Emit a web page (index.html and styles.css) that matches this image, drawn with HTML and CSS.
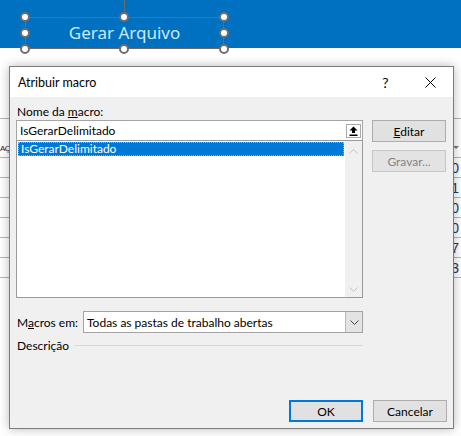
FILE: index.html
```html
<!DOCTYPE html>
<html lang="pt-BR">
<head>
    <meta charset="UTF-8">
    <meta name="viewport" content="width=device-width, initial-scale=1.0">
    <title>Atribuir macro</title>
    <link rel="stylesheet" href="styles.css">
</head>
<body>
    <!-- Faixa azul com o botão selecionado -->
    <div class="ribbon">
        <div class="shape">
            <span class="shape-stem"></span>
            <span class="shape-label">Gerar Arquivo</span>
            <span class="handle h-tl"></span>
            <span class="handle h-tc"></span>
            <span class="handle h-tr"></span>
            <span class="handle h-ml"></span>
            <span class="handle h-mr"></span>
            <span class="handle h-bl"></span>
            <span class="handle h-bc"></span>
            <span class="handle h-br"></span>
        </div>
    </div>

    <!-- Planilha atrás da janela -->
    <div class="sheet">
        <div class="sheet-row row-blank"></div>
        <div class="sheet-row row-head">
            <span class="cell-left">AÇ</span>
            <span class="cell-right"><span class="filter"></span></span>
        </div>
        <div class="sheet-row"><span class="cell-left"></span><span class="cell-right">0</span></div>
        <div class="sheet-row"><span class="cell-left"></span><span class="cell-right">1</span></div>
        <div class="sheet-row"><span class="cell-left"></span><span class="cell-right">0</span></div>
        <div class="sheet-row"><span class="cell-left"></span><span class="cell-right">0</span></div>
        <div class="sheet-row"><span class="cell-left"></span><span class="cell-right">7</span></div>
        <div class="sheet-row"><span class="cell-left"></span><span class="cell-right">3</span></div>
    </div>

    <!-- Janela Atribuir macro -->
    <div class="dialog">
        <div class="dialog-title">
            <span class="title-text">Atribuir macro</span>
            <span class="title-btn">?</span>
            <span class="title-btn">
                <svg width="11" height="11" viewBox="0 0 11 11"><path d="M0.5 0.5 L10.5 10.5 M10.5 0.5 L0.5 10.5" stroke="#000" stroke-width="1"/></svg>
            </span>
        </div>

        <div class="dialog-body">
            <div class="main-grid">
                <div class="left-col">
                    <div class="label">Nome da <u>m</u>acro:</div>
                    <div class="name-input">
                        <span class="name-text">IsGerarDelimitado</span>
                        <span class="collapse-btn">
                            <svg width="9" height="10" viewBox="0 0 9 10"><path d="M4.5 0.5 L8.5 4.5 H6 V7 H3 V4.5 H0.5 Z" fill="#000"/><rect x="0.5" y="8.5" width="8" height="1.5" fill="#000"/></svg>
                        </span>
                    </div>
                    <div class="macro-list">
                        <div class="list-items">
                            <div class="list-item selected">IsGerarDelimitado</div>
                        </div>
                        <div class="scrollbar">
                            <svg width="9" height="5" viewBox="0 0 9 5"><path d="M0.5 4.5 L4.5 0.5 L8.5 4.5" fill="none" stroke="#c2c2c2"/></svg>
                            <svg width="9" height="5" viewBox="0 0 9 5"><path d="M0.5 0.5 L4.5 4.5 L8.5 0.5" fill="none" stroke="#c2c2c2"/></svg>
                        </div>
                    </div>
                </div>
                <div class="right-col">
                    <button class="btn"><u>E</u>ditar</button>
                    <button class="btn disabled">Gravar...</button>
                </div>
            </div>

            <div class="scope-row">
                <span class="scope-label">M<u>a</u>cros em:</span>
                <div class="combo">
                    <span class="combo-text">Todas as pastas de trabalho abertas</span>
                    <span class="combo-btn">
                        <svg width="9" height="5" viewBox="0 0 9 5"><path d="M0.5 0.5 L4.5 4.5 L8.5 0.5" fill="none" stroke="#444"/></svg>
                    </span>
                </div>
            </div>

            <div class="desc-row">
                <span>Descrição</span>
                <span class="desc-line"></span>
            </div>
        </div>

        <div class="dialog-footer">
            <button class="btn default">OK</button>
            <button class="btn">Cancelar</button>
        </div>
    </div>
</body>
</html>
```

FILE: styles.css
```css
/* Base */
body {
    margin: 0;
    width: 461px;
    height: 436px;
    overflow: hidden;
    position: relative;
    background: #ffffff;
    font-family: 'Lato', 'Noto Sans', sans-serif;
    font-size: 12px;
    color: #000;
}

/* Blue band with the selected button shape */
.ribbon {
    height: 48px;
    background: #0070c0;
    position: relative;
}

.shape {
    position: absolute;
    left: 25px;
    top: 17px;
    width: 199px;
    height: 32px;
    box-sizing: border-box;
    border: 1px solid #6a6a6a;
    display: flex;
    align-items: center;
    justify-content: center;
}

.shape-label {
    color: #cbeafd;
    font-family: 'Noto Sans', sans-serif;
    font-size: 17px;
    font-weight: 400;
    margin-bottom: 1px;
}

.shape-stem {
    position: absolute;
    left: 98px;
    top: -18px;
    width: 1px;
    height: 18px;
    background: #6a6a6a;
}

.handle {
    position: absolute;
    width: 10px;
    height: 10px;
    box-sizing: border-box;
    border-radius: 50%;
    background: #fff;
    border: 2px solid #6e6e6e;
}

.h-tl { left: -6px; top: -6px; }
.h-tc { left: 93px; top: -6px; }
.h-tr { right: -6px; top: -6px; }
.h-ml { left: -6px; top: 10px; }
.h-mr { right: -6px; top: 10px; }
.h-bl { left: -6px; bottom: -6px; }
.h-bc { left: 93px; bottom: -6px; }
.h-br { right: -6px; bottom: -6px; }

/* Worksheet behind the dialog */
.sheet {
    display: flex;
    flex-direction: column;
    font-family: 'Liberation Sans', sans-serif;
    font-size: 12px;
}

.sheet-row {
    height: 20px;
    display: flex;
    justify-content: space-between;
    align-items: center;
    border-bottom: 1px solid #b4b4b4;
    box-sizing: border-box;
}

.row-blank {
    height: 71px;
}

.row-head {
    height: 39px;
    align-items: flex-end;
    padding-bottom: 4px;
}

.cell-left {
    font-size: 8px;
    letter-spacing: -0.5px;
    white-space: nowrap;
    color: #222;
}

.cell-right {
    padding-right: 2px;
    color: #1f3864;
    font-size: 14px;
}

.filter {
    display: block;
    width: 0;
    height: 0;
    border-left: 3px solid transparent;
    border-right: 3px solid transparent;
    border-top: 3px solid #777;
    margin-bottom: 4px;
}

/* Dialog */
.dialog {
    position: absolute;
    left: 9px;
    top: 66px;
    width: 445px;
    height: 363px;
    box-sizing: border-box;
    border: 1px solid #7c7c7c;
    background: #f0f0f0;
    box-shadow: 0 0 10px rgba(0, 0, 0, 0.28);
    display: flex;
    flex-direction: column;
}

.dialog-title {
    height: 30px;
    background: #fff;
    display: flex;
    align-items: center;
    padding-left: 8px;
    font-size: 12.5px;
}

.title-text {
    flex: 1;
}

.title-btn {
    width: 45px;
    height: 30px;
    display: flex;
    align-items: center;
    justify-content: center;
    font-size: 14px;
}

.dialog-body {
    flex: 1;
    padding: 7px 6px 0 6px;
}

.main-grid {
    display: grid;
    grid-template-columns: 347px 74px;
    column-gap: 9px;
}

.label {
    height: 16px;
    line-height: 16px;
    padding-left: 1px;
}

.name-input {
    height: 20px;
    box-sizing: border-box;
    border: 1px solid #a6a6a6;
    border-bottom: none;
    background: #fff;
    display: flex;
    align-items: center;
    padding: 0 1px 0 3px;
}

.name-text {
    flex: 1;
}

.collapse-btn {
    width: 15px;
    height: 14px;
    box-sizing: border-box;
    border: 1px solid #a9a9a9;
    display: flex;
    align-items: center;
    justify-content: center;
}

.macro-list {
    height: 158px;
    box-sizing: border-box;
    border: 1px solid #9a9a9a;
    background: #fff;
    display: flex;
}

.list-items {
    flex: 1;
    padding: 1px 1px 0 1px;
}

.list-item {
    height: 14px;
    line-height: 12px;
    padding-left: 2px;
    box-sizing: border-box;
}

.list-item.selected {
    background: #0078d7;
    color: #fff;
    border: 1px dotted #7fb4e8;
}

.scrollbar {
    width: 17px;
    background: #f0f0f0;
    display: flex;
    flex-direction: column;
    align-items: center;
    justify-content: space-between;
    padding: 8px 0 5px;
}

.right-col {
    display: flex;
    flex-direction: column;
    gap: 8px;
    padding-top: 16px;
}

.btn {
    height: 22px;
    width: 74px;
    box-sizing: border-box;
    border: 1px solid #adadad;
    background: #e1e1e1;
    font-family: inherit;
    font-size: 12px;
    color: #000;
    padding: 0;
}

.btn.disabled {
    color: #838383;
    border-color: #c6c6c6;
    background: #e3e3e3;
}

.btn.default {
    border: 2px solid #0078d7;
}

.scope-row {
    display: flex;
    align-items: center;
    margin-top: 13px;
}

.scope-label {
    width: 67px;
    padding-left: 1px;
    box-sizing: border-box;
}

.combo {
    width: 280px;
    height: 22px;
    box-sizing: border-box;
    border: 1px solid #a3a3a3;
    background: #fff;
    display: flex;
    align-items: center;
    padding-left: 3px;
}

.combo-text {
    flex: 1;
}

.combo-btn {
    width: 17px;
    height: 20px;
    box-sizing: border-box;
    border-left: 1px solid #b9b9b9;
    background: #e3e3e3;
    display: flex;
    align-items: center;
    justify-content: center;
}

.desc-row {
    display: flex;
    align-items: center;
    margin-top: 5px;
    padding-left: 1px;
    width: 347px;
    box-sizing: border-box;
}

.desc-line {
    flex: 1;
    height: 1px;
    background: #d9d9d9;
    margin-left: 5px;
}

.dialog-footer {
    display: flex;
    justify-content: flex-end;
    gap: 10px;
    padding: 0 6px 6px 0;
}
```
